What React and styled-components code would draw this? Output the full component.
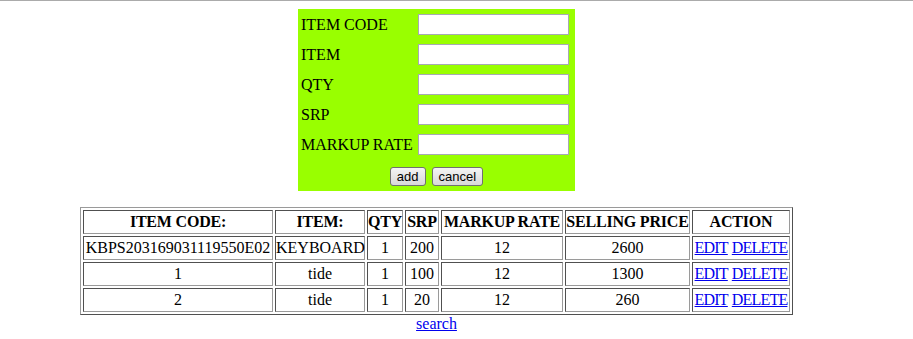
import React from "react";
import styled, { createGlobalStyle } from "styled-components";

const GlobalStyle = createGlobalStyle`
  html, body {
    margin: 0;
    padding: 0;
    background: #fff;
  }
  body {
    font-family: "Liberation Serif", "Times New Roman", serif;
    font-size: 16px;
    color: #000;
  }
`;

const items = [
  { code: "KBPS203169031119550E02", item: "KEYBOARD", qty: 1, srp: 200, rate: 12, price: 2600 },
  { code: "1", item: "tide", qty: 1, srp: 100, rate: 12, price: 1300 },
  { code: "2", item: "tide", qty: 1, srp: 20, rate: 12, price: 260 },
];

const fields = ["ITEM CODE", "ITEM", "QTY", "SRP", "MARKUP RATE"];

// header label + column width (border box) as in the original page
const columns = [
  ["ITEM CODE:", 190],
  ["ITEM:", 90],
  ["QTY", 36],
  ["SRP", 34],
  ["MARKUP RATE", 122],
  ["SELLING PRICE", 125],
  ["ACTION", 98],
];

const App = () => {
  return (
    <>
      <GlobalStyle />
      <Page>
        <Content>
          <ItemForm onSubmit={(e) => e.preventDefault()}>
            {fields.map((f) => (
              <React.Fragment key={f}>
                <Label>{f}</Label>
                <Input type="text" />
              </React.Fragment>
            ))}
            <Buttons>
              <Btn type="submit">add</Btn>
              <Btn type="button">cancel</Btn>
            </Buttons>
          </ItemForm>

          <ItemTable>
            <thead>
              <tr>
                {columns.map(([name, w]) => (
                  <Th key={name} $w={w}>
                    {name}
                  </Th>
                ))}
              </tr>
            </thead>
            <tbody>
              {items.map((row, i) => (
                <tr key={i}>
                  <td>{row.code}</td>
                  <td>{row.item}</td>
                  <td>{row.qty}</td>
                  <td>{row.srp}</td>
                  <td>{row.rate}</td>
                  <td>{row.price}</td>
                  <td>
                    <ActionLink href="#">EDIT</ActionLink>{" "}
                    <ActionLink href="#">DELETE</ActionLink>
                  </td>
                </tr>
              ))}
            </tbody>
          </ItemTable>
          <Link href="#">search</Link>
        </Content>
      </Page>
    </>
  );
};

const Page = styled.div`
  border-top: 1px solid #ababab;
  width: 913px;
  min-height: 338px;
`;

const Content = styled.div`
  width: 873px;
  display: flex;
  flex-direction: column;
  align-items: center;
  padding-top: 8px;
`;

const ItemForm = styled.form`
  background: #99ff00;
  width: 277px;
  box-sizing: border-box;
  padding: 5px 6px 6px 3px;
  display: grid;
  grid-template-columns: 117px 151px;
  grid-auto-rows: 21px;
  row-gap: 9px;
  align-items: center;
  margin-bottom: 16px;
`;

const Label = styled.label`
  line-height: 18px;
  white-space: nowrap;
`;

const Input = styled.input`
  height: 21px;
  width: 151px;
  box-sizing: border-box;
  margin: 0;
  border: 1px solid #a7a9b4;
  background: #fff;
  padding: 1px 2px;
  font-size: 13px;
`;

const Buttons = styled.div`
  grid-column: 1 / -1;
  display: flex;
  justify-content: center;
  gap: 6px;
  padding-left: 3px;
  height: 22px;
  align-items: flex-end;
`;

const Btn = styled.button`
  height: 19px;
  padding: 0 6px;
  margin: 0;
  border: 1px solid #707070;
  border-radius: 3px;
  background: linear-gradient(#f4f4f4, #e6e6e6 50%, #d8d8d8);
  font-family: "Liberation Sans", Arial, sans-serif;
  font-size: 13px;
  color: #000;
  line-height: 15px;
  cursor: pointer;
`;

const ItemTable = styled.table`
  table-layout: fixed;
  width: 713px;
  box-sizing: border-box;
  border-collapse: separate;
  border-spacing: 2px;
  border: 1px solid;
  border-color: #9a9a9a #505050 #505050 #9a9a9a;

  th,
  td {
    border: 1px solid;
    border-color: #505050 #9a9a9a #9a9a9a #505050;
    padding: 1px 0;
    line-height: 20px;
    text-align: center;
    white-space: nowrap;
    overflow: visible;
  }
`;

const Th = styled.th`
  box-sizing: border-box;
  width: ${({ $w }) => $w}px;
  font-weight: bold;
  letter-spacing: -0.2px;
`;

const Link = styled.a`
  color: #0000ee;
  text-decoration: underline;
  line-height: 18px;
`;

const ActionLink = styled(Link)`
  letter-spacing: -0.8px;
`;

export default App;
